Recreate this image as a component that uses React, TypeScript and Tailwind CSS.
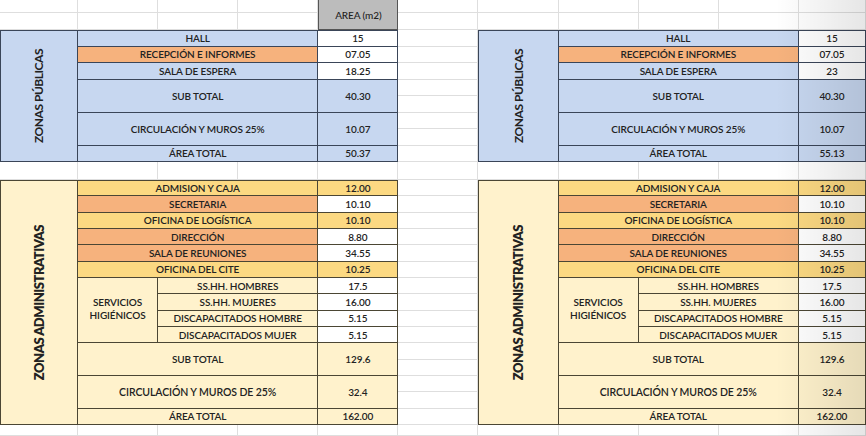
import React from 'react';

const BLUE = 'bg-[#c7d7f0]';
const ORANGE = 'bg-[#f6b27d]';
const GOLD = 'bg-[#fcd982]';
const CREAM = 'bg-[#fff2cc]';
const WHITE = 'bg-white';

const LINE_B = 'border-r border-b border-[#3a4558]';
const LINE_C = 'border-r border-b border-[#4b4634]';

function Cell({ className, children }: { className: string; children?: React.ReactNode }) {
  return (
    <div className={`flex items-center justify-center text-center ${className}`}>
      {children}
    </div>
  );
}

interface Cols {
  label: string;
  name: string;
  sub: string;
  val: string;
}

const left: Cols = { label: 'col-start-1', name: 'col-start-2', sub: 'col-start-3', val: 'col-start-5' };
const right: Cols = { label: 'col-start-7', name: 'col-start-8', sub: 'col-start-9', val: 'col-start-11' };

function PublicZones({ cols, values }: { cols: Cols; values: string[] }) {
  const rows = [
    { row: 'row-start-3 border-t', name: 'HALL', bg: BLUE, vbg: WHITE },
    { row: 'row-start-4', name: 'RECEPCIÓN E INFORMES', bg: ORANGE, vbg: WHITE },
    { row: 'row-start-5', name: 'SALA DE ESPERA', bg: BLUE, vbg: WHITE },
    { row: 'row-start-6 row-span-2', name: 'SUB TOTAL', bg: BLUE, vbg: BLUE },
    { row: 'row-start-8 row-span-2', name: 'CIRCULACIÓN Y MUROS 25%', bg: BLUE, vbg: BLUE },
    { row: 'row-start-10', name: 'ÁREA TOTAL', bg: BLUE, vbg: BLUE },
  ];
  return (
    <>
      <Cell className={`${cols.label} row-start-3 row-span-8 border-l border-t ${LINE_B} ${BLUE}`}>
        <span className="[writing-mode:vertical-rl] rotate-180 whitespace-nowrap text-[12px] leading-none font-bold tracking-[-0.04em]">
          ZONAS PÚBLICAS
        </span>
      </Cell>
      {rows.map((r, i) => (
        <React.Fragment key={r.name}>
          <Cell className={`${cols.name} col-span-3 ${r.row} ${LINE_B} ${r.bg}`}>{r.name}</Cell>
          <Cell className={`${cols.val} ${r.row} ${LINE_B} ${r.vbg}`}>{values[i]}</Cell>
        </React.Fragment>
      ))}
    </>
  );
}

function AdminZones({ cols }: { cols: Cols }) {
  const rows = [
    { row: 'row-start-12 border-t', name: 'ADMISION Y CAJA', bg: GOLD, vbg: GOLD, v: '12.00' },
    { row: 'row-start-13', name: 'SECRETARIA', bg: ORANGE, vbg: WHITE, v: '10.10' },
    { row: 'row-start-14', name: 'OFICINA DE LOGÍSTICA', bg: GOLD, vbg: GOLD, v: '10.10' },
    { row: 'row-start-15', name: 'DIRECCIÓN', bg: ORANGE, vbg: WHITE, v: '8.80' },
    { row: 'row-start-16', name: 'SALA DE REUNIONES', bg: ORANGE, vbg: WHITE, v: '34.55' },
    { row: 'row-start-17', name: 'OFICINA DEL CITE', bg: GOLD, vbg: GOLD, v: '10.25' },
  ];
  const baths = [
    { row: 'row-start-18', name: 'SS.HH. HOMBRES', v: '17.5' },
    { row: 'row-start-19', name: 'SS.HH. MUJERES', v: '16.00' },
    { row: 'row-start-20', name: 'DISCAPACITADOS HOMBRE', v: '5.15' },
    { row: 'row-start-21', name: 'DISCAPACITADOS MUJER', v: '5.15' },
  ];
  const totals = [
    { row: 'row-start-22 row-span-2', name: 'SUB TOTAL', v: '129.6', size: '' },
    { row: 'row-start-24 row-span-2', name: 'CIRCULACIÓN Y MUROS DE 25%', v: '32.4', size: 'text-[10.5px]' },
    { row: 'row-start-26', name: 'ÁREA TOTAL', v: '162.00', size: '' },
  ];
  return (
    <>
      <Cell className={`${cols.label} row-start-12 row-span-15 border-l border-t ${LINE_C} ${CREAM}`}>
        <span className="[writing-mode:vertical-rl] rotate-180 whitespace-nowrap text-[13px] leading-none font-extrabold tracking-[-0.04em]">
          ZONAS ADMINISTRATIVAS
        </span>
      </Cell>
      {rows.map((r) => (
        <React.Fragment key={r.name}>
          <Cell className={`${cols.name} col-span-3 ${r.row} ${LINE_C} ${r.bg}`}>{r.name}</Cell>
          <Cell className={`${cols.val} ${r.row} ${LINE_C} ${r.vbg}`}>{r.v}</Cell>
        </React.Fragment>
      ))}
      <Cell className={`${cols.name} row-start-18 row-span-4 flex-col pb-[2px] ${LINE_C} ${CREAM}`}>
        <span className="block leading-[13px]">SERVICIOS</span>
        <span className="block leading-[13px]">HIGIÉNICOS</span>
      </Cell>
      {baths.map((r) => (
        <React.Fragment key={r.name}>
          <Cell className={`${cols.sub} col-span-2 ${r.row} ${LINE_C} ${CREAM}`}>{r.name}</Cell>
          <Cell className={`${cols.val} ${r.row} ${LINE_C} ${WHITE}`}>{r.v}</Cell>
        </React.Fragment>
      ))}
      {totals.map((r) => (
        <React.Fragment key={r.name}>
          <Cell className={`${cols.name} col-span-3 ${r.row} ${LINE_C} ${CREAM} ${r.size}`}>{r.name}</Cell>
          <Cell className={`${cols.val} ${r.row} ${LINE_C} ${CREAM}`}>{r.v}</Cell>
        </React.Fragment>
      ))}
    </>
  );
}

export default function App() {
  // 11 x 27 sheet cells, 232 are taken by the two pairs of tables
  const fillers = Array.from({ length: 65 });

  return (
    <div className="relative h-[436px] w-[866px] overflow-hidden bg-white font-['Lato','Liberation_Sans',sans-serif] text-[10px] leading-none font-semibold tracking-[-0.01em] text-[#222]">
      <div className="grid h-full grid-cols-[78px_repeat(9,80.1px)_1fr] grid-rows-[13px_17px_repeat(8,16.5px)_18px_repeat(15,16.33px)_1fr]">
        <Cell className="col-start-5 row-start-1 row-span-2 border-l border-r border-b border-[#555] bg-[#bcbcbc] text-[10px] font-medium">
          AREA (m2)
        </Cell>

        <PublicZones cols={left} values={['15', '07.05', '18.25', '40.30', '10.07', '50.37']} />
        <PublicZones cols={right} values={['15', '07.05', '23', '40.30', '10.07', '55.13']} />
        <AdminZones cols={left} />
        <AdminZones cols={right} />

        {fillers.map((_, i) => (
          <div key={i} className="border-r border-b border-[#dedede]" />
        ))}
      </div>

      {/* shading at the right edge of the photo */}
      <div className="pointer-events-none absolute inset-y-0 right-0 w-[90px] bg-linear-to-l from-black/10 to-transparent" />
    </div>
  );
}
